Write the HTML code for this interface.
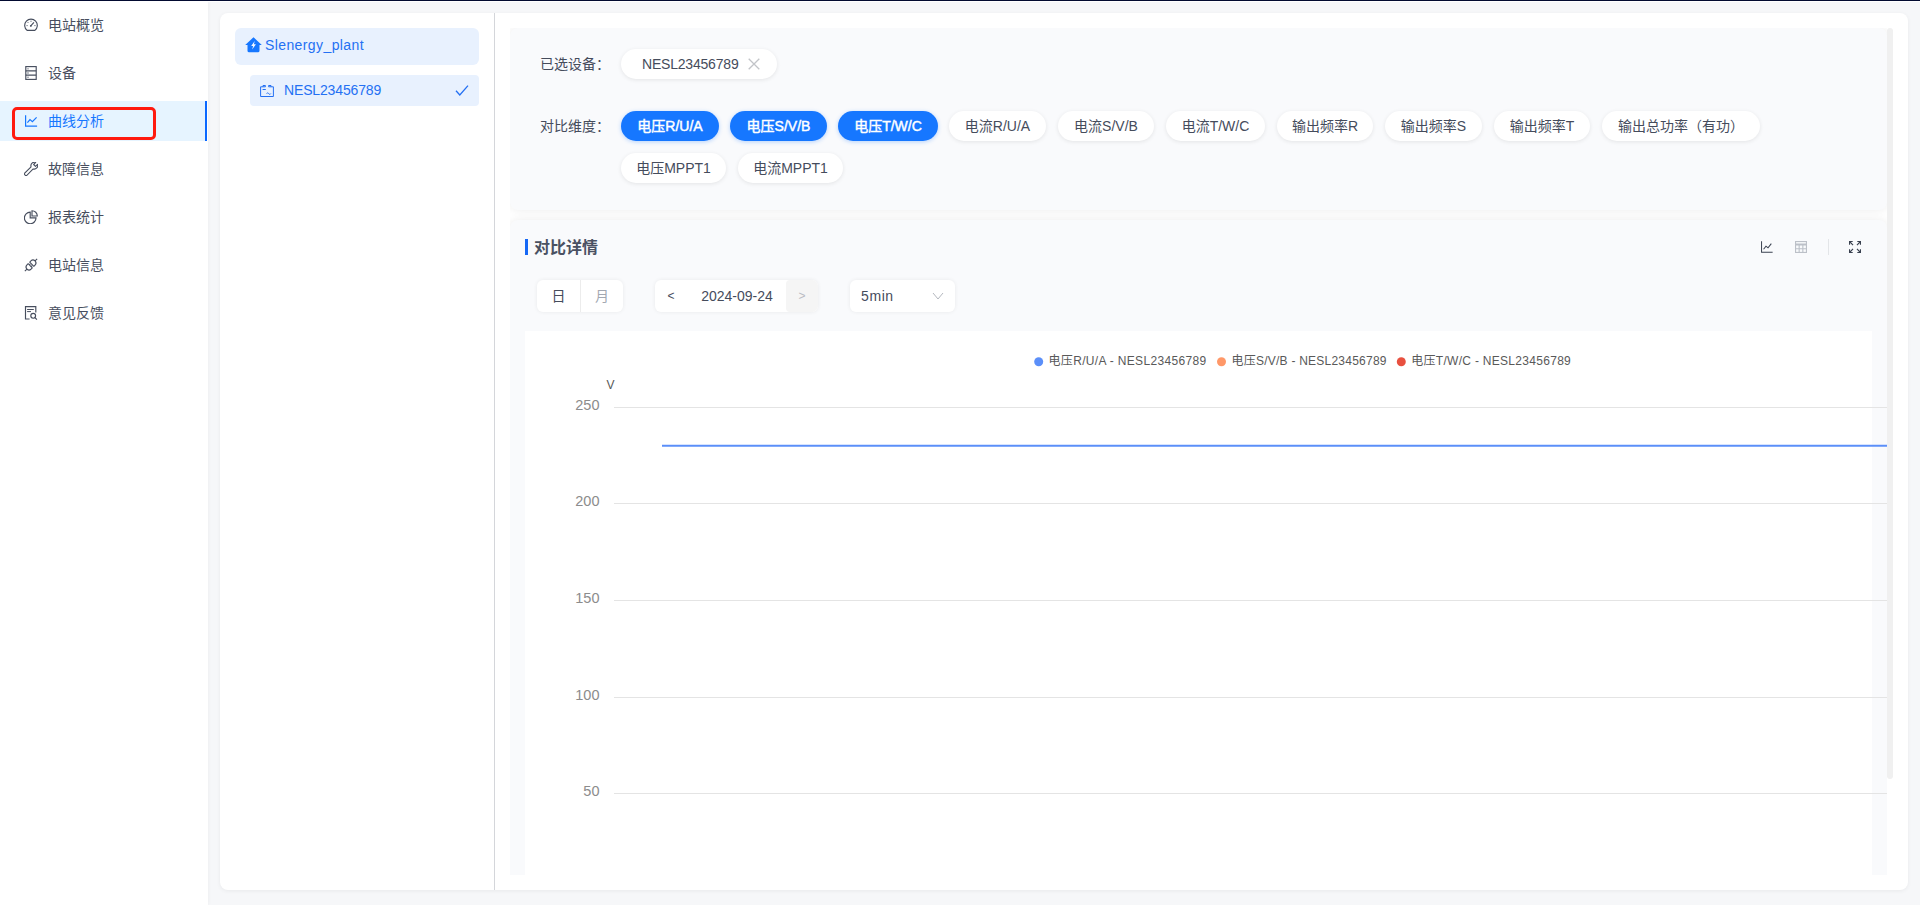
<!DOCTYPE html>
<html lang="zh-CN">
<head>
<meta charset="utf-8">
<title>曲线分析</title>
<style>
*{box-sizing:border-box;margin:0;padding:0}
html,body{width:1920px;height:905px;overflow:hidden}
body{background:#f6f7f9;font-family:"Liberation Sans","Noto Sans CJK SC",sans-serif;font-size:14px;color:#454c5c;position:relative}
.topbar{position:absolute;left:0;top:0;width:1920px;height:2px;background:#fff;border-top:1px solid #020a30;z-index:5}
/* ---------- sidebar ---------- */
.sider{position:absolute;left:0;top:0;width:208px;height:905px;background:#fff;box-shadow:1px 0 3px rgba(0,21,41,.03)}
.menu{list-style:none;padding-top:1px}
.menu li{position:relative;height:40px;margin:4px 0 8px;display:flex;align-items:center;padding-left:24px;color:#474e5e;font-size:14px;line-height:40px}
.menu li:first-child{margin-top:4px}
.menu li svg{width:14px;height:14px;flex:none;margin-right:10px;display:block}
.menu li.on{background:#e6f4ff;color:#1677ff;width:207px}
.menu li.on::after{content:"";position:absolute;right:0;top:0;bottom:0;width:2px;background:#0a68ff}
.hl{position:absolute;left:12px;top:107px;width:144px;height:33px;border:3px solid #ff1a0f;border-radius:5px;z-index:3}
/* ---------- main card ---------- */
.card{position:absolute;left:220px;top:13px;width:1688px;height:877px;background:#fff;border-radius:8px;box-shadow:0 1px 4px rgba(0,0,0,.06)}
.tree{position:absolute;left:0;top:0;width:275px;height:877px;border-right:1px solid #d4d6da}
.plant{position:absolute;left:15px;top:15px;width:244px;height:37px;border-radius:6px;background:#e8f1fe;color:#2470f3;font-size:14px;line-height:34px;padding-left:30px}
.plant svg{position:absolute;left:9.5px;top:9px;width:17px;height:16px}
.plant span{letter-spacing:.4px}
.dev span{letter-spacing:-.15px}
.dev{position:absolute;left:30px;top:62px;width:229px;height:31px;border-radius:4px;background:#e8f1fe;color:#2470f3;font-size:14px;line-height:30px;padding-left:34px}
.dev svg.i{position:absolute;left:10px;top:10px;width:14px;height:12px}
.dev svg.ck{position:absolute;right:10px;top:9px;width:14px;height:13px}
/* ---------- content ---------- */
.scroll{position:absolute;left:290px;top:15px;width:1383px;height:847px;overflow:hidden}
.view{position:absolute;left:0;top:0;width:1377px;height:847px;overflow:hidden}
.sec{position:absolute;left:0;width:1377px;background:#f9fafc;border-radius:8px;box-shadow:0 0 10px rgba(0,0,0,.08)}
.sec1{top:0;height:182px}
.sec2{top:192px;height:700px;overflow:hidden}
.sbar{position:absolute;left:1377px;top:0;width:6px;height:751px;background:#f0f0f0;border-radius:3px}
.lbl{position:absolute;left:30px;font-size:14px;color:#454c5c;line-height:20px}
.pill{position:absolute;height:30px;border-radius:15px;background:#fff;box-shadow:0 1px 4px rgba(0,0,0,.09);font-size:14px;line-height:30px;text-align:center;color:#454c5c;white-space:nowrap}
.pill.on{background:#1677ff;color:#fff;-webkit-text-stroke:.45px #fff;box-shadow:0 1px 4px rgba(22,119,255,.3)}

.pill .x{position:absolute;left:127px;top:9px;width:12px;height:12px}
.pill .t{letter-spacing:-.2px}
.sect-title{position:absolute;left:15px;top:19px;height:16px;border-left:3px solid #1668f5;padding-left:6px;font-size:16px;line-height:18.5px;font-weight:bold;color:#4a5162}
.hicons svg{position:absolute;top:21px;width:12px;height:12px}
.hicons i{position:absolute;left:1318px;top:19px;width:1px;height:16px;background:#e3e5e8}
.ctl{position:absolute;top:60px;height:32px;background:#fff;border-radius:6px;box-shadow:0 0 4px rgba(0,0,0,.07);font-size:14px;line-height:32px;color:#454c5c}
.seg{left:27px;width:86px;display:flex}
.seg span{width:43px;text-align:center}
.seg span+span{border-left:1px solid #ececec;color:#a3a8b2}
.date{left:145px;width:163px}
.date .pv{position:absolute;left:0;top:0;width:32px;text-align:center;font-size:12px}
.date .tx{position:absolute;left:32px;top:0;width:100px;text-align:center}
.date .nx{position:absolute;right:0;top:0;width:32px;height:32px;text-align:center;background:#f5f5f5;border-radius:4px 6px 6px 4px;color:#b9bcc3;font-size:12px}
.sel{left:340px;width:105px;padding-left:11px;letter-spacing:.6px}
.sel svg{position:absolute;right:11px;top:11px;width:12px;height:10px}
.chart{position:absolute;left:15px;top:111px;width:1347px;height:600px;background:#fff}
.chart svg{position:absolute;left:0;top:0;overflow:visible}
.chart text{font-family:"Liberation Sans","Noto Sans CJK SC",sans-serif}
</style>
</head>
<body>
<div class="topbar"></div>

<aside class="sider">
  <ul class="menu">
    <li><svg viewBox="0 0 14 14"><g fill="none" stroke="currentColor" stroke-width="1.15"><path d="M3.1 12.4A6.3 6.3 0 1 1 10.9 12.4Z"/><path d="M7 2.7v1.1M2.5 7.6h1.1M10.4 7.6h1.1M3.7 4.2l.8.8" stroke-width=".9"/><path d="M6.8 7.9L9.9 4.3"/></g><circle cx="6.8" cy="7.9" r=".9" fill="currentColor"/></svg>电站概览</li>
    <li><svg viewBox="0 0 14 14"><g fill="none" stroke="currentColor" stroke-width="1.15"><rect x="1.8" y=".6" width="10.4" height="12.8"/><path d="M1.8 4.9h10.4M1.8 9.1h10.4"/></g><g fill="currentColor"><circle cx="4" cy="2.8" r=".65"/><circle cx="4" cy="7" r=".65"/><circle cx="4" cy="11.2" r=".65"/></g></svg>设备</li>
    <li class="on"><svg viewBox="0 0 14 14"><g fill="none" stroke="currentColor" stroke-width="1.2"><path d="M1.6 1.2v10.9h11.5"/><path d="M3.4 8.6L6 5.6l2.4 2 4.2-4.2"/></g></svg>曲线分析</li>
    <li><svg viewBox="0 0 14 14"><g fill="none" stroke="currentColor" stroke-width="1.1" stroke-linejoin="round" transform="translate(7.4 6.6) rotate(45)"><path d="M-1.5 9V-1A3.6 3.6 0 0 1-1.3-7.4v2.9h2.6v-2.9A3.6 3.6 0 0 1 1.5-1V9z"/></g></svg>故障信息</li>
    <li><svg viewBox="0 0 14 14"><g fill="none" stroke="currentColor" stroke-width="1.15"><path d="M6.2 2.1a5.8 5.8 0 1 0 5.8 5.8h-5.8z"/><path d="M8 .7v5.3h5.3A5.3 5.3 0 0 0 8 .7z"/></g></svg>报表统计</li>
    <li><svg viewBox="0 0 14 14"><g fill="none" stroke="currentColor" stroke-width="1.1" stroke-linejoin="round" transform="translate(7 7) rotate(-45)"><path d="M-1.1-2.9v5.8h-1.7a2.9 2.9 0 0 1 0-5.8zM1.1-2.9v5.8h1.7a2.9 2.9 0 0 0 0-5.8z"/><path d="M-5.7 0h-3M5.7 0h3M-1.1-1.3h1.5M-1.1 1.3h1.5"/></g></svg>电站信息</li>
    <li><svg viewBox="0 0 14 14"><g fill="none" stroke="currentColor" stroke-width="1.15"><path d="M5.6 13H1.5V.6h10.3v6"/><path d="M3.1 3.5h6.7M3.1 5.6h3.9" stroke-width="1"/><circle cx="9.2" cy="9.8" r="2.4"/><path d="M11 11.6l1.9 2"/></g></svg>意见反馈</li>
  </ul>
  <div class="hl"></div>
</aside>

<main class="card">
  <section class="tree">
    <div class="plant"><svg viewBox="0 0 17 16"><path fill="#1677ff" d="M8.5.3L.2 8h2.3v5.7a1.6 1.6 0 0 0 1.6 1.6h8.8a1.6 1.6 0 0 0 1.6-1.6V8h2.3z"/><path fill="#f2f7ff" d="M9.7 3.9L6.2 8.9h1.9l-.9 3.6 3.7-5.2H8.9z"/></svg><span>Slenergy_plant</span></div>
    <div class="dev"><svg class="i" viewBox="0 0 14 12"><g fill="none" stroke="currentColor" stroke-width="1"><path d="M3 1.8H.6v9.7h12.8V1.8H11"/><path d="M3 .5h2.4v1.3H3zM8.6.5H11v1.3H8.6z"/><path d="M2.6 4.5h3.2M6.6 8.6c.7-1 1.4-1 2.1 0s1.4 1 2.1 0"/></g></svg><span>NESL23456789</span><svg class="ck" viewBox="0 0 14 13"><path fill="none" stroke="currentColor" stroke-width="1.3" d="M1 6.8l3.8 4.2L13 1.6"/></svg></div>
  </section>

  <div class="scroll">
    <div class="view">
    <section class="sec sec1">
      <div class="lbl" style="top:26px">已选设备：</div>
      <div class="pill" style="left:111px;top:21px;width:156px;text-align:left;padding-left:21px"><span class="t">NESL23456789</span><svg class="x" viewBox="0 0 12 12"><path d="M.7.7l10.6 10.6M11.3.7L.7 11.3" stroke="#c2c4c8" stroke-width="1.3" fill="none"/></svg></div>
      <div class="lbl" style="top:88px">对比维度：</div>
      <div class="pill on" style="left:111px;top:83px;width:98px">电压R/U/A</div>
      <div class="pill on" style="left:220px;top:83px;width:97px">电压S/V/B</div>
      <div class="pill on" style="left:328px;top:83px;width:100px">电压T/W/C</div>
      <div class="pill" style="left:439px;top:83px;width:97px">电流R/U/A</div>
      <div class="pill" style="left:548px;top:83px;width:96px">电流S/V/B</div>
      <div class="pill" style="left:656px;top:83px;width:99px">电流T/W/C</div>
      <div class="pill" style="left:767px;top:83px;width:96px">输出频率R</div>
      <div class="pill" style="left:875px;top:83px;width:97px">输出频率S</div>
      <div class="pill" style="left:984px;top:83px;width:96px">输出频率T</div>
      <div class="pill" style="left:1092px;top:83px;width:158px">输出总功率（有功）</div>
      <div class="pill" style="left:111px;top:125px;width:105px">电压MPPT1</div>
      <div class="pill" style="left:228px;top:125px;width:105px">电流MPPT1</div>
    </section>
    <section class="sec sec2">
      <div class="sect-title">对比详情</div>
      <div class="hicons">
        <svg style="left:1251px" viewBox="0 0 13 13"><g fill="none" stroke="#3a4150" stroke-width="1.1"><path d="M.6.4v11.8h12"/><path d="M2.8 9l2.6-3.4 2.2 1.8 3.6-4.6"/></g></svg>
        <svg style="left:1285px" viewBox="0 0 13 13"><g fill="none" stroke="#bcc0c8" stroke-width="1.2"><rect x=".6" y=".6" width="11.8" height="11.8"/><path d="M.6 3.2h11.8M.6 4.4h11.8M.6 8.4h11.8M4.500 4.4v8M8.500 4.4v8"/></g></svg>
        <i></i>
        <svg style="left:1339px" viewBox="0 0 13 13"><g fill="none" stroke="#3a4150" stroke-width="1.2"><path d="M.6 4V.6H4M9 .6h3.4V4M12.4 9v3.4H9M4 12.4H.6V9"/><path d="M.8.8l3.6 3.6M12.2.8L8.6 4.4M12.2 12.2L8.6 8.6M.8 12.2l3.6-3.6"/></g></svg>
      </div>
      <div class="ctl seg"><span>日</span><span>月</span></div>
      <div class="ctl date"><span class="pv">&lt;</span><span class="tx">2024-09-24</span><span class="nx">&gt;</span></div>
      <div class="ctl sel">5min<svg viewBox="0 0 12 10"><path d="M1 2l5 6 5-6" fill="none" stroke="#b4b8bf" stroke-width="1"/></svg></div>
      <div class="chart">
        <svg width="1347" height="600" viewBox="0 0 1347 600">
        <circle cx="513.7" cy="30.8" r="4.5" fill="#5b8ff9"/><text x="523.5" y="34" font-size="12" textLength="157.7" fill="#595959">电压R/U/A - NESL23456789</text>
        <circle cx="696.5" cy="30.8" r="4.5" fill="#ff9868"/><text x="706.5" y="34" font-size="12" textLength="155" fill="#595959">电压S/V/B - NESL23456789</text>
        <circle cx="876.3" cy="30.8" r="4.5" fill="#e8503f"/><text x="886.2" y="34" font-size="12" textLength="159.6" fill="#595959">电压T/W/C - NESL23456789</text>
        <text x="81.5" y="57.8" font-size="12" fill="#595959">V</text>
        <line x1="89" y1="76.5" x2="1400" y2="76.5" stroke="#e4e4e4" stroke-width="1"/><text x="74.5" y="79.0" text-anchor="end" font-size="14.5" fill="#8c8c8c">250</text>
        <line x1="89" y1="172.5" x2="1400" y2="172.5" stroke="#e4e4e4" stroke-width="1"/><text x="74.5" y="175.0" text-anchor="end" font-size="14.5" fill="#8c8c8c">200</text>
        <line x1="89" y1="269.5" x2="1400" y2="269.5" stroke="#e4e4e4" stroke-width="1"/><text x="74.5" y="272.0" text-anchor="end" font-size="14.5" fill="#8c8c8c">150</text>
        <line x1="89" y1="366.5" x2="1400" y2="366.5" stroke="#e4e4e4" stroke-width="1"/><text x="74.5" y="369.0" text-anchor="end" font-size="14.5" fill="#8c8c8c">100</text>
        <line x1="89" y1="462.5" x2="1400" y2="462.5" stroke="#e4e4e4" stroke-width="1"/><text x="74.5" y="465.0" text-anchor="end" font-size="14.5" fill="#8c8c8c">50</text>
        <line x1="137" y1="114.8" x2="1400" y2="114.8" stroke="#5b8ff9" stroke-width="2"/>
        </svg>
      </div>
    </section>
    </div>
    <div class="sbar"></div>
  </div>
</main>
</body>
</html>
